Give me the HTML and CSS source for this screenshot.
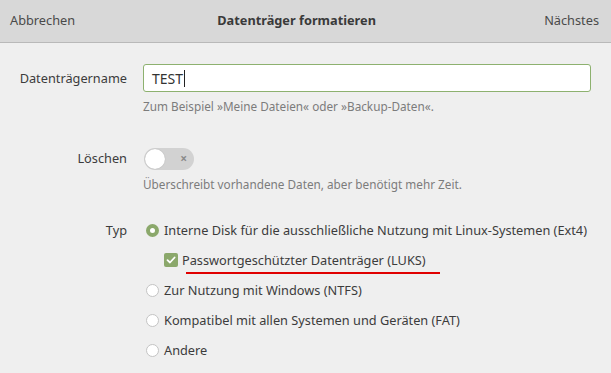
FILE: index.html
```html
<!DOCTYPE html>
<html lang="de">
<head>
<meta charset="utf-8">
<link rel="stylesheet" href="styles.css">
</head>
<body>
<header class="header">
  <span class="hbtn">Abbrechen</span>
  <span class="title">Datenträger formatieren</span>
  <span class="hbtn">Nächstes</span>
</header>
<main class="form">
  <div class="label name-label">Datenträgername</div>
  <div class="field">
    <div class="input"><span>TEST</span><span class="caret"></span></div>
    <div class="hint">Zum Beispiel »Meine Dateien« oder »Backup-Daten«.</div>
  </div>

  <div class="label erase-label">Löschen</div>
  <div class="field">
    <div class="switch"><span class="knob"></span><span class="x">×</span></div>
    <div class="hint">Überschreibt vorhandene Daten, aber benötigt mehr Zeit.</div>
  </div>

  <div class="label type-label">Typ</div>
  <div class="field options">
    <div class="opt"><span class="radio on"></span>Interne Disk für die ausschließliche Nutzung mit Linux-Systemen (Ext4)</div>
    <div class="opt sub"><span class="check"><svg width="10" height="8" viewBox="0 0 10 8"><path d="M1.5 4.2 L4 6.5 L8.6 1.5" fill="none" stroke="#fff" stroke-width="1.8" stroke-linecap="round" stroke-linejoin="round"/></svg></span><span class="luks">Passwortgeschützter Datenträger (LUKS)</span></div>
    <div class="opt"><span class="radio"></span>Zur Nutzung mit Windows (NTFS)</div>
    <div class="opt"><span class="radio"></span>Kompatibel mit allen Systemen und Geräten (FAT)</div>
    <div class="opt"><span class="radio"></span>Andere</div>
  </div>
</main>
</body>
</html>
```
FILE: styles.css
```css
* { box-sizing: border-box; }
html, body { margin: 0; padding: 0; }
body {
  width: 611px;
  height: 373px;
  overflow: hidden;
  background: #efefef;
  font-family: "Noto Sans", "DejaVu Sans", sans-serif;
  font-size: 12.75px;
  color: #3c3c3c;
}
.header {
  height: 43px;
  background: #d8d8d8;
  border-bottom: 1px solid #b9b9b9;
  display: flex;
  align-items: center;
  justify-content: space-between;
  padding: 0 12px 2px 10px;
}
.hbtn { color: #4a4a4a; }
.title { font-weight: bold; color: #3a3a3a; margin-right: 26px; }
.form {
  display: grid;
  grid-template-columns: 127px 1fr;
  column-gap: 16px;
  padding: 21px 20px 0 0;
}
.label {
  text-align: right;
  line-height: 28px;
}
.input {
  height: 28px;
  background: #fff;
  border: 1px solid #8db16f;
  border-radius: 3px;
  padding: 0 8px;
  display: flex;
  align-items: center;
  font-size: 14px;
  color: #333;
}
.caret { width: 1px; height: 17px; background: #222; margin-left: 1px; }
.hint {
  color: #7c7c7c;
  font-size: 11.75px;
  margin-top: 6px;
  height: 40px;
}
.erase-label { line-height: 22px; margin-top: 9px; }
.erase-label + .field { margin-top: 10px; }
.switch {
  margin-left: 1px;
  width: 50px;
  height: 22px;
  border-radius: 11px;
  background: #d2d2d2;
  position: relative;
  display: flex;
  align-items: center;
  justify-content: flex-end;
  padding-right: 7px;
}
.knob {
  position: absolute;
  left: 1px; top: 1px;
  width: 20px; height: 20px;
  border-radius: 50%;
  background: #fff;
  box-shadow: 0 0 1px rgba(0,0,0,0.25);
}
.x { color: #8a8a8a; font-size: 12px; font-weight: bold; line-height: 1; }
.type-label { line-height: 30px; margin-top: -1px; }
.options { display: flex; flex-direction: column; margin-top: -1px; }
.opt {
  height: 30px;
  display: flex;
  align-items: center;
  white-space: nowrap;
}
.radio {
  width: 13px; height: 13px;
  border-radius: 50%;
  background: #fff;
  border: 1px solid #c4c4c4;
  margin: 0 5px 0 3px;
  flex: none;
}
.radio.on { border: 4px solid #8ba86b; }
.sub { padding-left: 21px; }
.check {
  width: 14px; height: 14px;
  border-radius: 2px;
  background: #8ba86b;
  display: flex; align-items: center; justify-content: center;
  margin-right: 4px;
  flex: none;
}
.luks { position: relative; }
.luks::after {
  content: "";
  position: absolute;
  left: 4px;
  width: 254px;
  bottom: -5px;
  height: 2px;
  background: #e00000;
}
```
